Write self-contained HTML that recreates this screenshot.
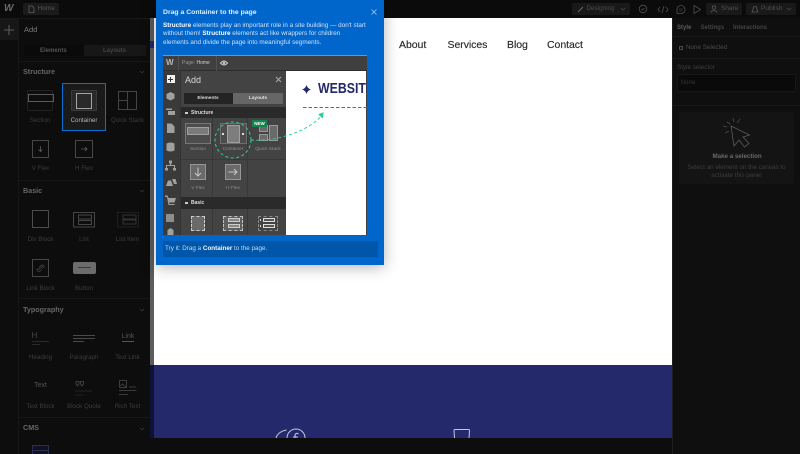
<!DOCTYPE html>
<html><head><meta charset="utf-8"><style>
html,body{margin:0;padding:0;width:800px;height:454px;overflow:hidden;background:#0d0d0d}
*{box-sizing:border-box}
body{font-family:"Liberation Sans",sans-serif;position:relative;filter:blur(.35px)}
.a{position:absolute}
.t{position:absolute;white-space:nowrap;text-align:center;transform:translateX(-50%);font-size:6.2px;line-height:8px;color:#3c3c3c}
.h{position:absolute;white-space:nowrap;font-size:7.2px;line-height:10px;font-weight:bold;color:#666;left:23px}
.l{position:absolute;background:#171717;height:1px;left:18px;width:132px}
.nav{position:absolute;top:39px;font-size:10.5px;letter-spacing:-.05px;line-height:13px;color:#2a2a2a;white-space:nowrap;-webkit-text-stroke:.15px #2a2a2a}
.g{position:absolute;white-space:nowrap}
.m{position:absolute;white-space:nowrap;text-align:center;transform:translateX(-50%);font-size:4.800px;line-height:6px;color:#8f8f8f}
svg{position:absolute;overflow:visible}
</style></head><body>

<!-- canvas -->
<div class="a" style="left:154px;top:18px;width:518px;height:347px;background:#fff"></div>
<div class="a" style="left:154px;top:365px;width:518px;height:73px;background:#23296a"></div>
<div class="a" style="left:150px;top:18px;width:4px;height:347px;background:#5c5c5c"></div>
<div class="a" style="left:150px;top:365px;width:4px;height:73px;background:#0f1238"></div>
<div class="a" style="left:150px;top:41px;width:4px;height:7px;background:#23296a"></div>
<span class="nav" style="left:399px">About</span>
<span class="nav" style="left:447.5px">Services</span>
<span class="nav" style="left:507px">Blog</span>
<span class="nav" style="left:547px">Contact</span>
<svg style="left:270px;top:425px" width="200" height="13" viewBox="0 0 200 13" fill="none" stroke="#c5c8dc" stroke-width="1">
<path d="M6 13C7 9 11 6 16.500 5"/><circle cx="26" cy="13" r="9"/><path d="M28.500 9C27 7.500 25 8.500 25 11V13M23 12H28"/>
<path d="M184.500 13L184 5.500Q184 4.500 185 4.500H198.500Q199.500 4.500 199.500 5.500L199 13"/>
</svg>

<!-- top bar -->
<div class="a" style="left:0;top:0;width:800px;height:18px;background:#0b0b0b"></div>
<div class="g" style="left:4px;top:3px;font-size:10px;line-height:11px;font-weight:bold;font-style:italic;color:#6b6b6b">W</div>
<div class="a" style="left:23px;top:3px;width:36px;height:12px;background:#1b1b1b;border-radius:2px"></div>
<svg style="left:28px;top:5px" width="7" height="8" fill="none" stroke="#5e5e5e" stroke-width=".8"><path d="M1 1H4L6 3V7.500H1Z"/></svg>
<div class="g" style="left:37.500px;top:5px;font-size:6.500px;line-height:8px;color:#555">Home</div>
<div class="a" style="left:572px;top:3px;width:58px;height:12px;background:#191919;border-radius:2px"></div>
<svg style="left:577px;top:5px" width="8" height="8" fill="none" stroke="#666" stroke-width="1"><path d="M1 7L6 2"/></svg>
<div class="g" style="left:586.500px;top:5px;font-size:6.300px;line-height:8px;color:#4c4c4c">Designing</div>
<svg style="left:620px;top:7px" width="6" height="4" fill="none" stroke="#4c4c4c" stroke-width=".7"><path d="M1 1L3 3L5 1"/></svg>
<svg style="left:638px;top:4px" width="70" height="11" fill="none" stroke="#4f4f4f" stroke-width=".8">
<circle cx="5" cy="5" r="3.800"/><path d="M3.300 5L4.500 6.200L6.700 3.900"/>
<path d="M22 3L20 5.500L22 8M28 3L30 5.500L28 8M26 2L24 9"/>
<path d="M39 9.500V5.500A4 4 0 1 1 43 9.500Z"/><path d="M41 5H45M41 7H44" stroke-width=".5"/>
<path d="M56 1.500L62.500 5.500L56 9.500Z"/>
</svg>
<div class="a" style="left:706px;top:3px;width:36px;height:12px;background:#191919;border-radius:2px"></div>
<svg style="left:710px;top:5px" width="8" height="8" fill="none" stroke="#5a5a5a" stroke-width=".8"><circle cx="4" cy="2.500" r="1.700"/><path d="M1 7.500C1 5 7 5 7 7.500"/></svg>
<div class="g" style="left:721px;top:5px;font-size:6.500px;line-height:8px;color:#4f4f4f">Share</div>
<div class="a" style="left:746px;top:3px;width:50px;height:12px;background:#191919;border-radius:2px"></div>
<svg style="left:751px;top:5px" width="8" height="8" fill="none" stroke="#5a5a5a" stroke-width=".8"><path d="M1 7L3 1.500H5L7 7ZM1 7H7"/></svg>
<div class="g" style="left:761px;top:5px;font-size:6.500px;line-height:8px;color:#4f4f4f">Publish</div>
<svg style="left:786px;top:7px" width="6" height="4" fill="none" stroke="#4c4c4c" stroke-width=".7"><path d="M1 1L3 3L5 1"/></svg>

<!-- left panel -->
<div class="a" style="left:0;top:18px;width:150px;height:420px;background:#0d0d0d"></div>
<div class="a" style="left:0;top:19px;width:18px;height:21px;background:#171717"></div>
<div class="a" style="left:18px;top:18px;width:1px;height:436px;background:#171717"></div>
<div class="a" style="left:0;top:18px;width:150px;height:1px;background:#171717"></div>
<svg style="left:4px;top:25px" width="10" height="10" stroke="#5e5e5e" stroke-width="1"><path d="M5 0V10M0 5H10"/></svg>
<div class="g" style="left:24px;top:24.500px;font-size:7.500px;line-height:9px;color:#7a7a7a">Add</div>
<div class="a" style="left:24px;top:45px;width:122px;height:11px;background:#171717;border-radius:1px"></div>
<div class="a" style="left:24px;top:45px;width:60px;height:11px;background:#0a0a0a"></div>
<div class="g" style="left:40px;top:46.500px;font-size:6px;line-height:8px;font-weight:bold;color:#555">Elements</div>
<div class="g" style="left:103px;top:46.500px;font-size:6px;line-height:8px;font-weight:bold;color:#444">Layouts</div>
<div class="l" style="top:61px"></div>
<div class="h" style="top:67px">Structure</div>
<svg style="left:139px;top:70px" width="6" height="4" fill="none" stroke="#3a3a3a" stroke-width=".7"><path d="M1 1L3 3L5 1"/></svg>

<!-- container selected -->
<div class="a" style="left:62px;top:83px;width:44px;height:48px;background:#1a1a1a;border:1px solid #0a6fd0"></div>
<div class="a" style="left:71px;top:90px;width:26px;height:21px;background:#2a2a2a;border:1px solid #3a3a3a;border-radius:1px"></div>
<div class="a" style="left:76px;top:93px;width:16px;height:16px;border:1px solid #a3a3a3"></div>
<div class="t" style="left:84px;top:117px;color:#b5b5b5">Container</div>
<!-- section -->
<div class="a" style="left:27px;top:90px;width:26px;height:21px;border:1px solid #222;border-radius:2px"></div>
<div class="a" style="left:27.500px;top:93.500px;width:26px;height:8px;border:1px solid #5a5a5a"></div>
<div class="t" style="left:40px;top:117px">Section</div>
<!-- quick stack -->
<svg style="left:118px;top:91px" width="19" height="19" fill="none" stroke="#444" stroke-width="1"><rect x=".5" y=".5" width="18" height="18"/><path d="M9.500 .5V18.500M.5 9.500H9.500"/></svg>
<div class="t" style="left:127.500px;top:117px">Quick Stack</div>
<!-- flex -->
<svg style="left:32px;top:140px" width="17" height="18" fill="none" stroke="#484848" stroke-width="1"><rect x=".5" y=".5" width="16" height="17"/><path d="M8.500 6V11.500M6.500 9.500L8.500 11.500L10.500 9.500" stroke="#5f5f5f" stroke-width=".8"/></svg>
<div class="t" style="left:40.500px;top:165px">V Flex</div>
<svg style="left:75px;top:140px" width="18" height="18" fill="none" stroke="#484848" stroke-width="1"><rect x=".5" y=".5" width="17" height="17"/><path d="M6 9H12M10 7L12 9L10 11" stroke="#5f5f5f" stroke-width=".8"/></svg>
<div class="t" style="left:84px;top:165px">H Flex</div>

<div class="l" style="top:180px"></div>
<div class="h" style="top:186px">Basic</div>
<svg style="left:139px;top:189px" width="6" height="4" fill="none" stroke="#3a3a3a" stroke-width=".7"><path d="M1 1L3 3L5 1"/></svg>
<svg style="left:32px;top:210px" width="17" height="18" fill="none" stroke="#4c4c4c" stroke-width="1"><rect x=".5" y=".5" width="16" height="17"/></svg>
<svg style="left:73px;top:212px" width="22" height="16" fill="none" stroke="#464646" stroke-width="1"><rect x=".5" y=".5" width="21" height="14.500"/><rect x="5.500" y="3" width="13" height="4"/><rect x="5.500" y="8.500" width="13" height="4"/></svg>
<svg style="left:117px;top:212px" width="22" height="16" fill="none" stroke="#333" stroke-width="1"><rect x=".5" y=".5" width="21" height="14.500" stroke="#1f1f1f"/><rect x="6" y="3" width="13" height="4"/><rect x="6" y="8" width="13" height="4"/></svg>
<div class="t" style="left:40.500px;top:236px">Div Block</div>
<div class="t" style="left:84px;top:236px">List</div>
<div class="t" style="left:127.500px;top:236px">List Item</div>
<svg style="left:32px;top:259px" width="17" height="18" fill="none" stroke="#484848" stroke-width="1"><rect x=".5" y=".5" width="16" height="17"/><path d="M6 11L11 7M7 8.500L9 6.500Q10 5.500 11.500 6.500T11.500 8.500L10.500 9.500M10 10.500L8 12Q7 13 5.500 12T5.500 10L6 9.500" stroke-width=".7"/></svg>
<div class="a" style="left:73px;top:262px;width:23px;height:12px;background:#6c6c6c;border-radius:2px"></div>
<div class="a" style="left:78px;top:267px;width:13px;height:1px;background:#3a3a3a"></div>
<div class="t" style="left:40.500px;top:285px">Link Block</div>
<div class="t" style="left:84px;top:285px">Button</div>

<div class="l" style="top:298px"></div>
<div class="h" style="top:305px">Typography</div>
<svg style="left:139px;top:308px" width="6" height="4" fill="none" stroke="#3a3a3a" stroke-width=".7"><path d="M1 1L3 3L5 1"/></svg>
<div class="g" style="left:31.500px;top:331px;font-size:8px;line-height:10px;color:#444">H</div>
<div class="a" style="left:32px;top:341px;width:17px;height:1px;background:#2a2a2a"></div>
<div class="a" style="left:32px;top:344px;width:8px;height:1px;background:#2a2a2a"></div>
<div class="a" style="left:73px;top:335px;width:22px;height:1px;background:#4a4a4a"></div>
<div class="a" style="left:73px;top:338px;width:22px;height:1px;background:#4a4a4a"></div>
<div class="a" style="left:73px;top:341px;width:11px;height:1px;background:#4a4a4a"></div>
<div class="g" style="left:121.500px;top:333px;font-size:7px;line-height:8px;color:#555;border-bottom:1px solid #555">Link</div>
<div class="t" style="left:40.500px;top:354px">Heading</div>
<div class="t" style="left:84px;top:354px">Paragraph</div>
<div class="t" style="left:127.500px;top:354px">Text Link</div>
<div class="g" style="left:34px;top:382px;font-size:7px;line-height:8px;color:#565656">Text</div>
<svg style="left:75px;top:381px" width="18" height="16" fill="none" stroke="#4a4a4a" stroke-width=".8"><path d="M1 .5H4V3L2.500 5L1 3ZM5.500 .5H8.500V3L7 5L5.500 3Z"/><path d="M0 10H17" stroke="#2a2a2a"/><path d="M0 14H8" stroke="#2a2a2a"/></svg>
<svg style="left:119px;top:380px" width="18" height="19" fill="none" stroke="#484848" stroke-width=".8"><rect x=".5" y=".5" width="7" height="7"/><path d="M1 6L3.500 4L7 7"/><path d="M10 7H17M0 10.500H17.500M0 14.500H9" stroke="#4a4a4a"/></svg>
<div class="t" style="left:40.500px;top:403px">Text Block</div>
<div class="t" style="left:84px;top:403px">Block Quote</div>
<div class="t" style="left:127.500px;top:403px">Rich Text</div>

<div class="l" style="top:417px"></div>
<div class="h" style="top:423px">CMS</div>
<svg style="left:139px;top:427px" width="6" height="4" fill="none" stroke="#3a3a3a" stroke-width=".7"><path d="M1 1L3 3L5 1"/></svg>
<div class="a" style="left:32px;top:445px;width:17px;height:9px;border:1px solid #2a2e55;border-bottom:0;background:#101223"></div>
<div class="a" style="left:32px;top:450px;width:17px;height:1px;background:#2a2e55"></div>

<!-- bottom band & right panel -->
<div class="a" style="left:154px;top:438px;width:518px;height:16px;background:#0d0d0d"></div>
<div class="a" style="left:672px;top:18px;width:128px;height:436px;background:#0f0f0f;border-left:1px solid #1f1f1f"></div>
<div class="g" style="left:677px;top:24px;font-size:6px;line-height:8px;font-weight:bold;color:#5d5d5d">Style</div>
<div class="a" style="left:677px;top:36px;width:15px;height:1px;background:#444"></div>
<div class="g" style="left:700.500px;top:24px;font-size:6px;line-height:8px;font-weight:bold;color:#444">Settings</div>
<div class="g" style="left:733px;top:24px;font-size:6px;line-height:8px;font-weight:bold;color:#444">Interactions</div>
<div class="a" style="left:673px;top:36px;width:127px;height:1px;background:#191919"></div>
<div class="a" style="left:678.500px;top:45.500px;width:4px;height:4px;border:1px solid #4a4a4a"></div>
<div class="g" style="left:686px;top:43.500px;font-size:6.300px;line-height:8px;color:#4a4a4a">None Selected</div>
<div class="a" style="left:673px;top:58px;width:127px;height:1px;background:#191919"></div>
<div class="g" style="left:677px;top:63.500px;font-size:6.300px;line-height:8px;color:#3e3e3e">Style selector</div>
<div class="a" style="left:677px;top:74px;width:119px;height:18px;background:#0a0a0a;border:1px solid #171717;border-radius:2px"></div>
<div class="g" style="left:680.500px;top:79px;font-size:6.300px;line-height:8px;color:#333">None</div>
<div class="a" style="left:673px;top:105px;width:127px;height:1px;background:#191919"></div>
<div class="a" style="left:679px;top:112px;width:115px;height:72px;background:#141414;border-radius:2px"></div>
<svg style="left:720px;top:116px" width="32" height="32" fill="none" stroke="#4a4a4a" stroke-width=".8"><path d="M11 10L14 30L19 24L24.500 31L29 27.500L23 21L29.500 19Z" stroke="#5a5a5a"/><path d="M7 6L10 8M13 2L14 6M20 3L17 7M3 10L7 11M5 17L9 15"/></svg>
<div class="g" style="left:712.500px;top:152.500px;font-size:6.200px;line-height:8px;font-weight:bold;color:#6a6a6a">Make a selection</div>
<div class="g" style="left:687px;top:162.500px;width:99px;text-align:center;font-size:6.300px;line-height:9px;color:#3d3d3d;white-space:nowrap">Select an element on the canvas to</div>
<div class="g" style="left:687px;top:171px;width:99px;text-align:center;font-size:6.300px;line-height:9px;color:#3d3d3d">activate this panel</div>

<!-- popover -->
<div class="a" style="left:156px;top:0;width:228px;height:265px;background:#0066cc;box-shadow:0 2px 14px rgba(0,0,0,.3)"></div>
<div class="g" style="left:163px;top:8px;font-size:6.850px;line-height:10px;font-weight:bold;color:#e4effa">Drag a Container to the page</div>
<svg style="left:371px;top:9px" width="6" height="6" stroke="#a9ccf0" stroke-width=".8"><path d="M.5 .5L5.500 5.500M5.500 .5L.5 5.500"/></svg>
<div class="g" style="left:163px;top:21.500px;font-size:6.330px;line-height:8.500px;color:#cfe2f6"><b style="color:#fff">Structure</b> elements play an important role in a site building — don't start<br>without them! <b style="color:#fff">Structure</b> elements act like wrappers for children<br>elements and divide the page into meaningful segments.</div>

<!-- mock -->
<div class="a" style="left:163px;top:55px;width:204px;height:180px;background:#404040;overflow:hidden;border-top:1px solid #6a93c4">
 <div class="a" style="left:0;top:0;width:204px;height:15px;background:#3f3f3f;border-bottom:1px solid #2d2d2d"></div>
 <div class="g" style="left:3px;top:2px;font-size:8px;line-height:10px;font-weight:bold;color:#b8b8b8">W</div>
 <div class="a" style="left:15px;top:0;width:1px;height:15px;background:#505050"></div>
 <div class="g" style="left:19px;top:4px;font-size:5px;line-height:6px;color:#999">Page: <span style="color:#d0d0d0">Home</span></div>
 <div class="a" style="left:53px;top:0;width:1px;height:15px;background:#505050"></div>
 <svg style="left:57px;top:4px" width="8" height="6" fill="none" stroke="#c8c8c8" stroke-width="1"><path d="M.5 3Q4 -1 7.500 3Q4 7 .5 3Z"/><circle cx="4" cy="3" r=".8"/></svg>
 <div class="a" style="left:0;top:15px;width:17px;height:165px;background:#3a3a3a"></div>
 <div class="a" style="left:3.500px;top:19px;width:8px;height:8px;background:#f2f2f2"></div>
 <svg style="left:4px;top:19.500px" width="7" height="7" stroke="#333" stroke-width="1"><path d="M3.500 1V6M1 3.500H6"/></svg>
 <svg style="left:0;top:0" width="17" height="180" fill="#a0a0a0" stroke="none">
  <path d="M7.500 36L11.500 38V42.500L7.500 44.500L3.500 42.500V38Z"/>
  <path d="M3 52.500H9V54H3ZM5 55H12V59H5Z"/>
  <path d="M4 67.500H8.500L11.500 70.500V77H4Z"/>
  <path d="M3.500 87.500Q7.500 85.500 11.500 87.500V94.500Q7.500 96.500 3.500 94.500Z"/>
  <path d="M6 104.500H9V107.500H8V109H12V112H13V114.500H10V112H11V110H4V112H5V114.500H2V112H3V109H7V107.500H6Z"/>
  <path d="M3 130L5 124.500H8L10 130ZM9 123H12.500L14 128H11Z"/>
  <path d="M2 139.500H4.500L5.500 142H13L11.500 146.500H6L6.500 148H11.500V149H5.500L4 141H2Z"/>
  <path d="M3 158H11V166H3Z" fill="#8e8e8e"/>
  <path d="M7.500 172L10.500 174V180H4.500V174Z"/>
 </svg>
 <div class="a" style="left:17px;top:15px;width:106px;height:165px;background:#434343;border-left:1px solid #333"></div>
 <div class="g" style="left:22px;top:18px;font-size:9px;line-height:12px;color:#d8d8d8">Add</div>
 <svg style="left:112px;top:20px" width="7" height="7" stroke="#aaa" stroke-width="1"><path d="M1 1L6 6M6 1L1 6"/></svg>
 <div class="a" style="left:21px;top:37px;width:99px;height:11px;background:#666;border-radius:1px"></div>
 <div class="a" style="left:21px;top:37px;width:49px;height:11px;background:#242424"></div>
 <div class="m" style="left:45px;top:40px;color:#d8d8d8;font-weight:bold">Elements</div>
 <div class="m" style="left:95px;top:40px;color:#e0e0e0;font-weight:bold">Layouts</div>
 <div class="a" style="left:18px;top:51px;width:105px;height:11px;background:#2a2a2a"></div>
 <div class="a" style="left:22px;top:55.500px;width:3px;height:2px;background:#ccc"></div>
 <div class="g" style="left:28px;top:53.500px;font-size:5px;line-height:6px;font-weight:bold;color:#ddd">Structure</div>
 <div class="a" style="left:49px;top:62px;width:1px;height:79px;background:#383838"></div>
 <div class="a" style="left:84px;top:62px;width:1px;height:79px;background:#383838"></div>
 <div class="a" style="left:18px;top:103px;width:105px;height:1px;background:#383838"></div>
 <!-- section icon -->
 <div class="a" style="left:22px;top:67px;width:26px;height:21px;background:#4c4c4c;border:1px solid #777"></div>
 <div class="a" style="left:24px;top:71px;width:22px;height:8px;background:#7a7a7a;border:1px solid #a0a0a0"></div>
 <div class="m" style="left:35px;top:91px">Section</div>
 <!-- container -->
 <div class="a" style="left:57px;top:67px;width:27px;height:21px;background:#4c4c4c;border:1px solid #6e6e6e"></div>
 <div class="a" style="left:64px;top:69px;width:13px;height:18px;background:#7d7d7d;border:1px solid #a0a0a0"></div>
 <div class="a" style="left:59px;top:77px;width:2px;height:2px;background:#ddd"></div>
 <div class="a" style="left:79px;top:77px;width:2px;height:2px;background:#ddd"></div>
 <div class="m" style="left:70px;top:91px">Container</div>
 <!-- quick -->
 <div class="a" style="left:96px;top:69px;width:9px;height:7px;background:#6a6a6a;border:1px solid #999"></div>
 <div class="a" style="left:96px;top:77.500px;width:9px;height:7px;background:#6a6a6a;border:1px solid #999"></div>
 <div class="a" style="left:105.500px;top:69px;width:9px;height:15.500px;background:#6a6a6a;border:1px solid #999"></div>
 <div class="m" style="left:105px;top:91px">Quick Stack</div>
 <div class="a" style="left:89px;top:64px;width:15px;height:7px;background:#15824f;color:#fff;font-size:4.500px;line-height:7px;font-weight:bold;text-align:center">NEW</div>
 <!-- flex -->
 <div class="a" style="left:27px;top:108px;width:16px;height:16px;background:#6a6a6a;border:1px solid #969696"></div>
 <svg style="left:27px;top:108px" width="16" height="16" fill="none" stroke="#c8c8c8" stroke-width="1"><path d="M8 3.500V12M5 9L8 12L11 9"/></svg>
 <div class="m" style="left:35px;top:130px">V Flex</div>
 <div class="a" style="left:62px;top:108px;width:16px;height:16px;background:#6a6a6a;border:1px solid #969696"></div>
 <svg style="left:62px;top:108px" width="16" height="16" fill="none" stroke="#c8c8c8" stroke-width="1"><path d="M3.500 8H12M9 5L12 8L9 11"/></svg>
 <div class="m" style="left:70px;top:130px">H Flex</div>
 <div class="a" style="left:18px;top:141px;width:105px;height:12px;background:#2a2a2a"></div>
 <div class="a" style="left:22px;top:146px;width:3px;height:2px;background:#ccc"></div>
 <div class="g" style="left:28px;top:144px;font-size:5px;line-height:6px;font-weight:bold;color:#ddd">Basic</div>
 <div class="a" style="left:49px;top:153px;width:1px;height:27px;background:#383838"></div>
 <div class="a" style="left:84px;top:153px;width:1px;height:27px;background:#383838"></div>
 <div class="a" style="left:28px;top:160px;width:14px;height:15px;background:#6a6a6a;border:1px dashed #ccc"></div>
 <div class="a" style="left:60px;top:160px;width:20px;height:15px;background:#5f5f5f;border:1px dashed #c0c0c0"></div>
 <div class="a" style="left:65px;top:162px;width:12px;height:4px;background:#888;border:1px solid #ccc"></div>
 <div class="a" style="left:65px;top:168px;width:12px;height:4px;background:#888;border:1px solid #ccc"></div>
 <div class="a" style="left:95px;top:160px;width:20px;height:15px;border:1px dashed #888"></div>
 <div class="a" style="left:100px;top:162px;width:12px;height:4px;background:#555;border:1px solid #ddd"></div>
 <div class="a" style="left:100px;top:168px;width:12px;height:4px;background:#555;border:1px solid #ddd"></div>
 <div class="a" style="left:96.500px;top:163px;width:1.500px;height:1.500px;background:#ddd"></div>
 <div class="a" style="left:96.500px;top:169px;width:1.500px;height:1.500px;background:#ddd"></div>
 <!-- white stage -->
 <div class="a" style="left:123px;top:15px;width:80px;height:165px;background:#fff"></div>
 <svg style="left:139px;top:29px" width="9" height="9" fill="#23296a"><path d="M4.500 0Q5.500 3.500 9 4.500Q5.500 5.500 4.500 9Q3.500 5.500 0 4.500Q3.500 3.500 4.500 0Z"/></svg>
 <div class="g" style="left:155px;top:25px;font-size:14.500px;line-height:16px;font-weight:bold;color:#23296a;transform:scaleX(.85);transform-origin:left">WEBSITE</div>
 <svg style="left:0;top:0" width="204" height="180" fill="none" stroke="#5068b0" stroke-width="1" stroke-dasharray="3.500 2"><path d="M140 51.500H204"/></svg>
 <svg style="left:0;top:0" width="204" height="180" fill="none" stroke="#2ecf8c" stroke-width="1" stroke-dasharray="3 2.500"><circle cx="70" cy="84" r="18"/><path d="M88 84C115 86 148 74 160 58"/><path d="M160 57L156 58.500L159.500 61.500Z" fill="#2ecf8c" stroke-dasharray="none"/></svg>
</div>

<!-- try it -->
<div class="a" style="left:163px;top:241px;width:215px;height:16px;background:#0056a8;border-radius:1px"></div>
<div class="g" style="left:165px;top:245px;font-size:6.300px;line-height:8px;color:#c4daf2">Try it: Drag a <b style="color:#f2f7fd">Container</b> to the page.</div>
</body></html>
